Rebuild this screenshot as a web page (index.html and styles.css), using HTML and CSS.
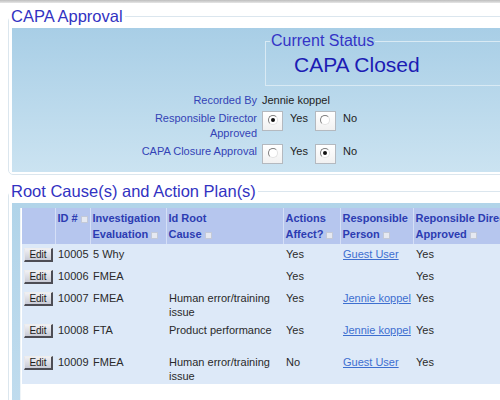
FILE: index.html
```html
<!DOCTYPE html>
<html>
<head>
<meta charset="utf-8">
<link rel="stylesheet" href="styles.css">
</head>
<body>
<div class="page">
  <div class="topbar"></div>

  <fieldset class="fs fs-approval">
    <legend class="fs-legend">CAPA Approval</legend>
    <div class="panel panel-approval">
      <fieldset class="status">
        <legend class="status-legend">Current Status</legend>
        <div class="status-text">CAPA Closed</div>
      </fieldset>
      <div class="form">
        <div class="lbl">Recorded By</div>
        <div class="val">Jennie koppel</div>

        <div class="lbl">Responsible Director<br>Approved</div>
        <div class="val radios">
          <span class="rbox"><span class="radio on"></span></span><span class="opt">Yes</span>
          <span class="rbox"><span class="radio"></span></span><span class="opt">No</span>
        </div>

        <div class="lbl">CAPA Closure Approval</div>
        <div class="val radios">
          <span class="rbox"><span class="radio"></span></span><span class="opt">Yes</span>
          <span class="rbox"><span class="radio on"></span></span><span class="opt">No</span>
        </div>
      </div>
    </div>
  </fieldset>

  <fieldset class="fs fs-root">
    <legend class="fs-legend">Root Cause(s) and Action Plan(s)</legend>
    <div class="panel panel-root">
      <div class="tablewrap">
        <table class="grid">
          <colgroup>
            <col class="c-edit"><col class="c-id"><col class="c-inv"><col class="c-root"><col class="c-act"><col class="c-person"><col class="c-dir">
          </colgroup>
          <thead>
            <tr>
              <th></th>
              <th class="nowrap">ID #<span class="sort"></span></th>
              <th>Investigation<br>Evaluation<span class="sort"></span></th>
              <th>Id Root<br>Cause<span class="sort"></span></th>
              <th>Actions<br>Affect?<span class="sort"></span></th>
              <th>Responsible<br>Person<span class="sort"></span></th>
              <th class="nowrap">Reponsible Director<br>Approved<span class="sort"></span></th>
            </tr>
          </thead>
          <tbody>
            <tr>
              <td><button class="edit">Edit</button></td>
              <td>10005</td><td>5 Why</td><td></td><td>Yes</td>
              <td><a href="#" class="lnk">Guest User</a></td><td>Yes</td>
            </tr>
            <tr>
              <td><button class="edit">Edit</button></td>
              <td>10006</td><td>FMEA</td><td></td><td>Yes</td>
              <td></td><td>Yes</td>
            </tr>
            <tr>
              <td><button class="edit">Edit</button></td>
              <td>10007</td><td>FMEA</td><td>Human error/training issue</td><td>Yes</td>
              <td><a href="#" class="lnk">Jennie koppel</a></td><td>Yes</td>
            </tr>
            <tr class="tall">
              <td><button class="edit">Edit</button></td>
              <td>10008</td><td>FTA</td><td>Product performance</td><td>Yes</td>
              <td><a href="#" class="lnk">Jennie koppel</a></td><td>Yes</td>
            </tr>
            <tr>
              <td><button class="edit">Edit</button></td>
              <td>10009</td><td>FMEA</td><td>Human error/training issue</td><td>No</td>
              <td><a href="#" class="lnk">Guest User</a></td><td>Yes</td>
            </tr>
          </tbody>
        </table>
      </div>
    </div>
  </fieldset>
</div>
</body>
</html>
```

FILE: styles.css
```css
html, body {
  margin: 0;
  padding: 0;
  overflow: hidden;
  background: #fff;
  font-family: "Liberation Sans", Arial, sans-serif;
  font-size: 11px;
  color: #2a2a2a;
}

.page {
  width: 620px;
  height: 400px;
}

.topbar {
  height: 3px;
  background: linear-gradient(#bdbdbd, #e6e6e6);
}

.fs {
  margin: 3px 0 0 8px;
  padding: 0 0 2px 3px;
  border: 1px solid #dbe6ee;
  border-radius: 5px;
  min-width: 0;
}

.fs-root {
  margin-top: 6px;
}

.fs-legend {
  padding: 0 2px;
  margin-left: -3px;
  font-size: 16.5px;
  line-height: 20px;
  color: #3232c2;
}

.panel {
  margin-top: 2px;
}

.panel-approval {
  background: linear-gradient(#a8cee6, #cbe3f1);
  padding: 4px 0 8px 0;
}

.status {
  margin: 0 0 7px 253px;
  padding: 0 0 8px 28px;
  border: 1px solid #d9eaf4;
  border-right: none;
  min-width: 0;
}

.status-legend {
  margin-left: -24px;
  padding: 0 1px;
  font-size: 16px;
  line-height: 18px;
  color: #3434c6;
}

.status-text {
  margin-top: 3px;
  font-size: 21px;
  line-height: 24px;
  color: #1c1cb4;
}

.form {
  display: grid;
  grid-template-columns: 245px auto;
  column-gap: 5px;
  row-gap: 3px;
  line-height: 15px;
}

.lbl {
  text-align: right;
  color: #3443b6;
}

.val {
  color: #222;
}

.radios {
  display: flex;
  align-items: flex-start;
}

.rbox {
  box-sizing: border-box;
  width: 21px;
  height: 20px;
  border: 1px solid #b4b9bf;
  background: linear-gradient(#ffffff, #f1f1f1);
  display: flex;
  align-items: flex-start;
  justify-content: center;
  padding-top: 3px;
}

.radio {
  box-sizing: border-box;
  width: 10px;
  height: 10px;
  border-radius: 50%;
  border: 1px solid;
  border-color: #7d7d7d #e2e2e2 #e2e2e2 #7d7d7d;
  background: #fff;
  position: relative;
}

.radio.on::after {
  content: "";
  position: absolute;
  left: 2px;
  top: 2px;
  width: 4px;
  height: 4px;
  border-radius: 50%;
  background: #111;
}

.opt {
  margin: 0 7px 0 7px;
  color: #222;
}

.panel-root {
  background: linear-gradient(#b1d4e9, #c0dcee);
  padding: 5px 0 0 8px;
  height: 200px;
}

.tablewrap {
  background: #fff;
  padding-left: 1px;
  height: 200px;
  border-left: 1px solid #eef4f8;
  box-sizing: border-box;
}

.grid {
  border-collapse: collapse;
  table-layout: fixed;
  width: 521px;
}

.c-edit { width: 33px; }
.c-id { width: 35px; }
.c-inv { width: 76px; }
.c-root { width: 117px; }
.c-act { width: 57px; }
.c-person { width: 73px; }
.c-dir { width: 130px; }

.grid th {
  background: #b6c6ee;
  border-left: 1px solid #d5dff6;
  padding: 2px 2px 2px 2px;
  height: 32px;
  vertical-align: top;
  text-align: left;
  font-weight: bold;
  font-size: 11px;
  line-height: 16px;
  color: #2c3cb2;
}

.grid th:first-child {
  border-left: none;
}

.grid th.nowrap {
  white-space: nowrap;
}

.sort {
  display: inline-block;
  width: 5px;
  height: 5px;
  margin-left: 3px;
  background: #e6e9f1;
  border: 1px solid #c3c9d8;
  vertical-align: middle;
}

.grid td {
  background: #dde9f8;
  padding: 3px 2px 1px 3px;
  vertical-align: top;
  line-height: 14px;
  color: #2a2a2a;
}

.grid tr.tall td {
  height: 28px;
}

.edit {
  display: block;
  box-sizing: border-box;
  width: 29px;
  height: 14px;
  margin: 1px 0 3px -1px;
  padding: 0;
  font-family: "Liberation Sans", Arial, sans-serif;
  font-size: 10px;
  line-height: 12px;
  color: #1a1a1a;
  background: linear-gradient(#f0f0f4, #c9cbd6);
  border: 1px solid;
  border-color: #eeeeee #4d4d55 #4d4d55 #e6e6ea;
  border-width: 1px 2px 2px 1px;
}

.lnk {
  color: #3d6fd0;
  text-decoration: underline;
}
```
